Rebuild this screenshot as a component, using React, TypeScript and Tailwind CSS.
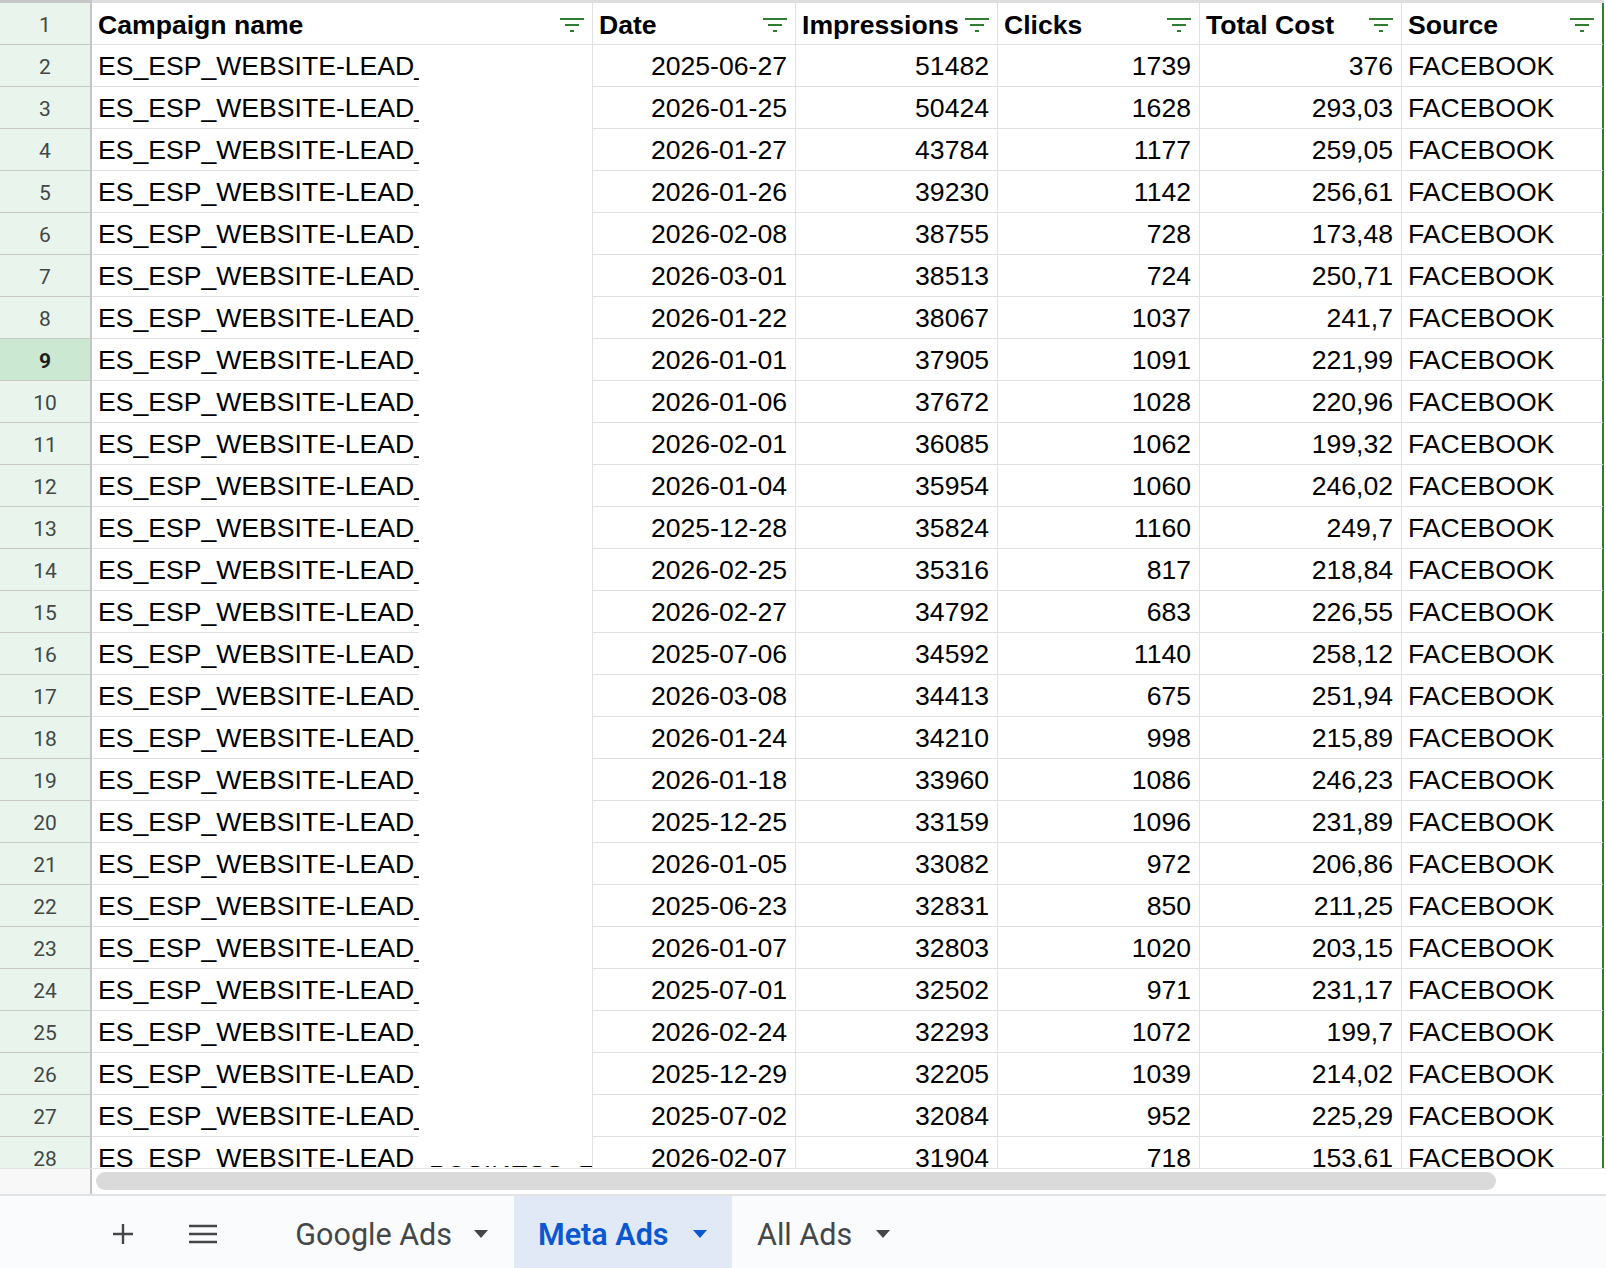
import type { ReactNode } from 'react'

const rows: [string, string, string, string][] = [
  ['2025-06-27', '51482', '1739', '376'],
  ['2026-01-25', '50424', '1628', '293,03'],
  ['2026-01-27', '43784', '1177', '259,05'],
  ['2026-01-26', '39230', '1142', '256,61'],
  ['2026-02-08', '38755', '728', '173,48'],
  ['2026-03-01', '38513', '724', '250,71'],
  ['2026-01-22', '38067', '1037', '241,7'],
  ['2026-01-01', '37905', '1091', '221,99'],
  ['2026-01-06', '37672', '1028', '220,96'],
  ['2026-02-01', '36085', '1062', '199,32'],
  ['2026-01-04', '35954', '1060', '246,02'],
  ['2025-12-28', '35824', '1160', '249,7'],
  ['2026-02-25', '35316', '817', '218,84'],
  ['2026-02-27', '34792', '683', '226,55'],
  ['2025-07-06', '34592', '1140', '258,12'],
  ['2026-03-08', '34413', '675', '251,94'],
  ['2026-01-24', '34210', '998', '215,89'],
  ['2026-01-18', '33960', '1086', '246,23'],
  ['2025-12-25', '33159', '1096', '231,89'],
  ['2026-01-05', '33082', '972', '206,86'],
  ['2025-06-23', '32831', '850', '211,25'],
  ['2026-01-07', '32803', '1020', '203,15'],
  ['2025-07-01', '32502', '971', '231,17'],
  ['2026-02-24', '32293', '1072', '199,7'],
  ['2025-12-29', '32205', '1039', '214,02'],
  ['2025-07-02', '32084', '952', '225,29'],
  ['2026-02-07', '31904', '718', '153,61'],
]

const cellFont = { fontFamily: '"Liberation Sans", Arial, sans-serif' }

function FilterIcon() {
  return (
    <svg width="24" height="14" viewBox="0 0 24 14" className="absolute right-[8px] top-[15px]">
      <path d="M0 1h24M5 7h14M10 13h4" stroke="#2e7d32" strokeWidth="1.8" fill="none" />
    </svg>
  )
}

function Caret({ color }: { color: string }) {
  return (
    <svg width="14" height="8" viewBox="0 0 14 8">
      <path d="M0 0h14L7 8z" fill={color} />
    </svg>
  )
}

function HeaderCell({ label, width, last }: { label: string; width: string; last?: boolean }) {
  return (
    <div
      className={`relative h-full shrink-0 border-b border-[#e1e1e1] pl-[6px] pt-[7px] text-[26.6px] font-bold leading-[30px] text-black ${width} ${
        last ? 'border-r-2 border-r-[#2e7d32]' : 'border-r'
      }`}
    >
      {label}
      <FilterIcon />
    </div>
  )
}

function NumCell({ children, width }: { children: ReactNode; width: string }) {
  return (
    <div
      className={`h-full shrink-0 border-r border-b border-[#e1e1e1] pr-[8px] pt-[6px] text-right text-[26.6px] leading-[30px] text-black ${width}`}
    >
      {children}
    </div>
  )
}

function RowHeader({ n, active }: { n: number; active?: boolean }) {
  return (
    <div
      className={`flex h-full w-[92px] shrink-0 items-center justify-center border-r-2 border-b border-r-[#c4c4c4] border-b-[#c9c9c9] pt-[4px] text-[21px] ${
        active ? 'bg-[#cbe8d3] font-bold text-[#1f1f1f]' : 'bg-[#e9f5ec] text-[#444746]'
      }`}
      style={{ fontFamily: 'Roboto, "Liberation Sans", sans-serif' }}
    >
      {n}
    </div>
  )
}

export default function App() {
  return (
    <div className="flex h-[1268px] w-[1606px] flex-col overflow-hidden bg-white">
      {/* grid */}
      <div className="relative h-[1168px] shrink-0 overflow-hidden" style={cellFont}>
        <div className="flex h-[3px]">
          <div className="w-[92px] bg-[#c6c6c6]" />
          <div className="w-[1512px] bg-[#dedede]" />
        </div>

        <div className="flex h-[42px]">
          <RowHeader n={1} />
          <HeaderCell label="Campaign name" width="w-[501px]" />
          <HeaderCell label="Date" width="w-[203px]" />
          <HeaderCell label="Impressions" width="w-[202px]" />
          <HeaderCell label="Clicks" width="w-[202px]" />
          <HeaderCell label="Total Cost" width="w-[202px]" />
          <HeaderCell label="Source" width="w-[202px]" last />
        </div>

        {rows.map((r, i) => {
          const n = i + 2
          const name = n === 28 ? 'ES_ESP_WEBSITE-LEAD_BUSINESS_ES_30' : 'ES_ESP_WEBSITE-LEAD_BUSINESS_ES'
          return (
            <div key={n} className="flex h-[42px]">
              <RowHeader n={n} active={n === 9} />
              <div className="h-full w-[501px] shrink-0 overflow-hidden whitespace-nowrap border-r border-b border-[#e1e1e1] pl-[6px] pt-[6px] text-[26.6px] leading-[30px] text-black">
                {name}
              </div>
              <NumCell width="w-[203px]">{r[0]}</NumCell>
              <NumCell width="w-[202px]">{r[1]}</NumCell>
              <NumCell width="w-[202px]">{r[2]}</NumCell>
              <NumCell width="w-[202px]">{r[3]}</NumCell>
              <div className="h-full w-[202px] shrink-0 border-r-2 border-b border-[#e1e1e1] border-r-[#2e7d32] pl-[6px] pt-[6px] text-[26.6px] leading-[30px] text-black">
                FACEBOOK
              </div>
            </div>
          )
        })}

        {/* white box lying over the right part of column A */}
        <div className="absolute left-[419px] top-[45px] h-[1121px] w-[173px] bg-white" />
      </div>

      {/* horizontal scrollbar */}
      <div className="flex h-[26px] shrink-0 border-t border-[#e3e3e3]">
        <div className="h-full w-[92px] border-r-2 border-[#c4c4c4] bg-[#f8f8f8]" />
        <div className="flex-1 pl-[4px] pt-[3px]">
          <div className="h-[18px] w-[1400px] rounded-full bg-[#dadada]" />
        </div>
      </div>

      {/* sheet tabs */}
      <div
        className="flex flex-1 items-stretch border-t-2 border-[#e3e3e3] bg-[#f9fbfd] text-[30.5px] text-[#444746]"
        style={{ fontFamily: 'Roboto, "Liberation Sans", sans-serif' }}
      >
        <div className="flex w-[160px] shrink-0 items-center justify-center pl-[86px] pt-[4px]">
          <svg width="20" height="20" viewBox="0 0 20 20">
            <path d="M10 0v20M0 10h20" stroke="#444746" strokeWidth="2.4" />
          </svg>
        </div>
        <div className="flex w-[86px] shrink-0 items-center justify-center pt-[4px]">
          <svg width="28" height="20" viewBox="0 0 28 20">
            <path d="M0 2h28M0 10h28M0 18h28" stroke="#444746" strokeWidth="2.6" />
          </svg>
        </div>
        <div className="flex w-[268px] shrink-0 items-center justify-end gap-[22px] pr-[26px] pt-[4px]">
          <span className="pt-[2px]">Google Ads</span>
          <Caret color="#444746" />
        </div>
        <div className="flex w-[218px] shrink-0 items-center gap-[24px] bg-[#e1e9f7] pl-[24px] pt-[4px] font-semibold text-[#0b57d0]">
          <span className="pt-[2px]">Meta Ads</span>
          <Caret color="#0b57d0" />
        </div>
        <div className="flex items-center gap-[24px] pl-[25px] pt-[4px]">
          <span className="pt-[2px]">All Ads</span>
          <Caret color="#444746" />
        </div>
      </div>
    </div>
  )
}
